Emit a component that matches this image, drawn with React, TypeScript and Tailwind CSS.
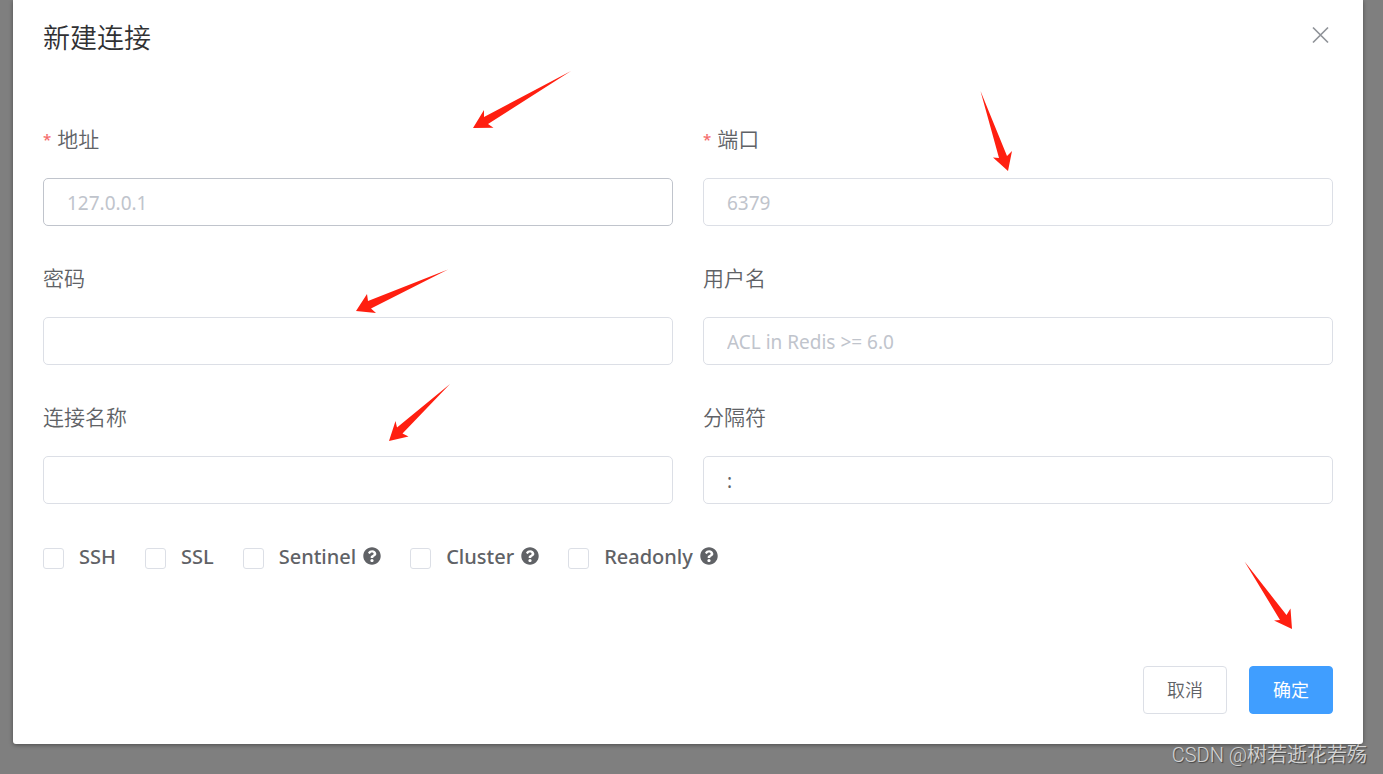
import { useState } from 'react'
import type { ReactNode } from 'react'
import clsx from 'clsx'
import { FaQuestionCircle } from 'react-icons/fa'

interface ArrowProps {
  points: string
  width: number
  height: number
  className: string
}

function Arrow({ points, width, height, className }: ArrowProps) {
  return (
    <svg
      width={width}
      height={height}
      viewBox={`0 0 ${width} ${height}`}
      className={clsx('absolute pointer-events-none z-10', className)}
      aria-hidden="true"
    >
      <polygon points={points} fill="#ff1f10" />
    </svg>
  )
}

interface FieldProps {
  id: string
  label: string
  required?: boolean
  active?: boolean
  placeholder?: string
  defaultValue?: string
  type?: string
  children?: ReactNode
}

function Field({ id, label, required, active, placeholder, defaultValue, type = 'text', children }: FieldProps) {
  return (
    <div className="relative">
      <label htmlFor={id} className="flex items-center gap-1.5 mb-6 text-[21px] leading-[30px] font-[350]">
        {required && <span className="text-[#f56c6c] text-[15px] font-medium">*</span>}
        {label}
      </label>
      <input
        id={id}
        type={type}
        placeholder={placeholder}
        defaultValue={defaultValue}
        className={clsx(
          'block w-full h-12 px-[23px] pt-0.5 border rounded-[5px] bg-white text-[19px] placeholder:text-[#c0c4cc] outline-none focus:border-[#409eff]',
          active ? 'border-[#c0c4cc]' : 'border-[#dcdfe6]'
        )}
      />
      {children}
    </div>
  )
}

const options = [
  { name: 'SSH', help: false },
  { name: 'SSL', help: false },
  { name: 'Sentinel', help: true },
  { name: 'Cluster', help: true },
  { name: 'Readonly', help: true }
]

export default function App() {
  const [checked, setChecked] = useState<string[]>([])

  const toggle = (name: string) => {
    setChecked(prev => (prev.includes(name) ? prev.filter(n => n !== name) : [...prev, name]))
  }

  return (
    <div className="relative min-h-screen bg-[#7f7f7f] pl-[13px] pr-5 pb-[30px] text-[#606266] font-['Noto_Sans','Noto_Sans_CJK_SC',sans-serif]">
      <form
        className="bg-white rounded-b-[3px] shadow-[0_1px_4px_rgba(0,0,0,0.4)] px-[30px] pt-5 pb-[30px]"
        onSubmit={e => e.preventDefault()}
      >
        <div className="flex items-start justify-between mb-[68px]">
          <h2 className="text-[27px] leading-9 font-[350] text-[#303133]">新建连接</h2>
          <button type="button" aria-label="关闭" className="p-1 text-[#909399]">
            <svg width="17" height="22" viewBox="0 0 17 22" fill="none" stroke="currentColor" strokeWidth="1.7">
              <path d="M1 3.5 L16 18.5 M16 3.5 L1 18.5" />
            </svg>
          </button>
        </div>

        <div className="grid grid-cols-2 gap-x-[30px] gap-y-[37px]">
          <Field id="host" label="地址" placeholder="127.0.0.1" required active>
            <Arrow
              className="left-[428px] -top-[55px]"
              width={102}
              height={61}
              points="100,2 13,48 13,41 2,59 22.5,58.7 17,55"
            />
          </Field>
          <Field id="port" label="端口" placeholder="6379" required>
            <Arrow
              className="left-[276px] -top-[34px]"
              width={36}
              height={82}
              points="1.5,1 20,68 14,67.5 29,81 33,61 28,66"
            />
          </Field>
          <Field id="password" label="密码" type="password">
            <Arrow
              className="left-[312px] top-[5px]"
              width={94}
              height={47}
              points="93,1.5 13,33 12,26 1,43 21,45 16,40.5"
            />
          </Field>
          <Field id="username" label="用户名" placeholder="ACL in Redis >= 6.0" />
          <Field id="name" label="连接名称">
            <Arrow
              className="left-[345px] -top-[19px]"
              width={64}
              height={60}
              points="62,1 9,44.5 7.5,38 1,58 20.5,53.5 14.5,50.5"
            />
          </Field>
          <Field id="separator" label="分隔符" defaultValue=":" />
        </div>

        <div className="flex flex-wrap items-center gap-x-[29px] mt-[38px] text-[20px] leading-[30px] font-medium">
          {options.map(({ name, help }) => (
            <label key={name} className="flex items-center">
              <input
                type="checkbox"
                checked={checked.includes(name)}
                onChange={() => toggle(name)}
                className="appearance-none size-[21px] mt-0.5 mr-[15px] border border-[#dcdfe6] rounded-[3px] bg-white checked:bg-[#409eff] checked:border-[#409eff]"
              />
              {name}
              {help && <FaQuestionCircle className="ml-[7px] mb-0.5 size-[18px]" />}
            </label>
          ))}
        </div>

        <div className="flex justify-end gap-[22px] mt-[94px] text-[18px]">
          <button type="button" className="h-12 px-[23px] border border-[#dcdfe6] rounded-[4px] bg-white font-[350]">
            取消
          </button>
          <div className="relative">
            <button type="submit" className="h-12 px-[23px] border border-[#409eff] rounded-[4px] bg-[#409eff] text-white">
              确定
            </button>
            <Arrow
              className="right-[40px] -top-[106px]"
              width={50}
              height={70}
              points="1.5,1.5 37,60 31,60.5 49,69 47.5,48.5 43.5,55"
            />
          </div>
        </div>
      </form>

      <span className="absolute right-4 bottom-1 text-[20px] leading-[30px] text-[#d4d4d4] font-[350] [text-shadow:1px_1px_1px_#444] font-['Roboto','Noto_Sans_CJK_SC',sans-serif]">
        CSDN @树若逝花若殇
      </span>
    </div>
  )
}
